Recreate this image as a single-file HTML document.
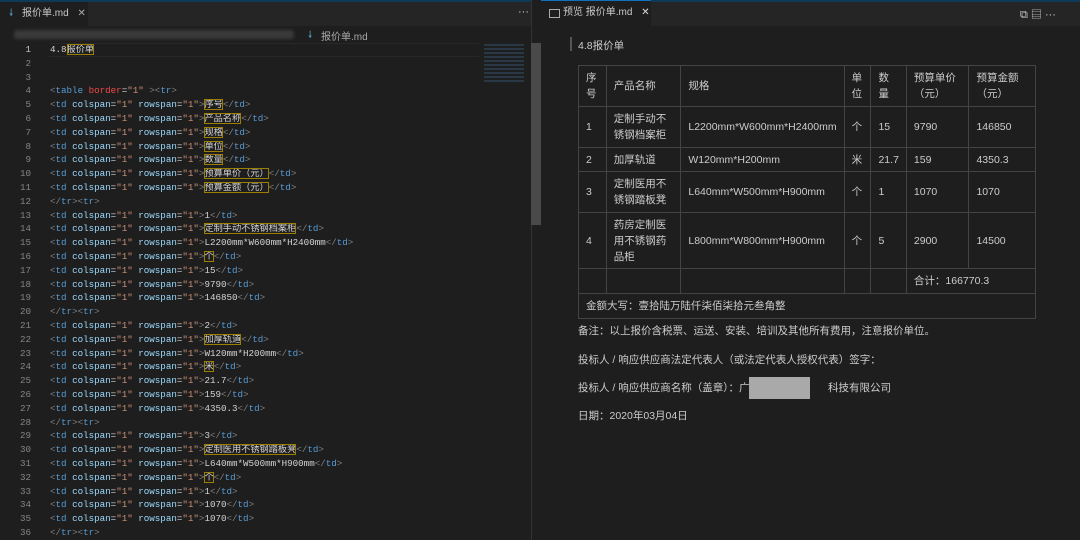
<!DOCTYPE html>
<html><head><meta charset="utf-8"><style>
*{margin:0;padding:0;box-sizing:border-box}
body{width:1080px;height:540px;background:#1e1e1e;overflow:hidden;position:relative;font-family:"Liberation Sans","Noto Sans CJK SC",sans-serif}
.topline{position:absolute;left:0;top:0;width:1080px;height:2px;background:#0e3a5a}
.tabbar{position:absolute;top:2px;height:24px;background:#252526}
.tab{position:absolute;top:2px;height:24px;background:#1e1e1e;color:#c8c8c8;font-size:10px;line-height:24px;padding-left:22px}
.crumb{position:absolute;left:0;top:26px;width:531px;height:17px;background:#1e1e1e;color:#aaa;font-size:10px}
.blur{position:absolute;top:4px;height:9px;background:#3a3a3a;border-radius:3px;filter:blur(1.5px)}
.code{position:absolute;left:0;top:43px;width:531px;font-family:"Liberation Mono","Noto Sans CJK SC",monospace;font-size:9.2px;color:#d4d4d4}
.ln{height:13.8px;line-height:13.8px;white-space:pre;position:relative}
.ln .n{position:absolute;left:0;width:31px;text-align:right;color:#858585}
.ln .c{position:absolute;left:50px}
.t{color:#569cd6}.g{color:#808080}.a{color:#9cdcfe}.v{color:#ce9178}.r{color:#f44747}
.b{outline:1px solid #9c7e00;outline-offset:-1px}
.cur{position:absolute;left:49px;top:43px;width:430px;height:14px;border-top:1px solid #282828;border-bottom:1px solid #282828}
.pv{position:absolute;left:541px;top:26px;width:539px;height:514px;background:#1e1e1e;color:#cccccc;font-size:10.5px}
table{position:absolute;left:37px;top:39px;border-collapse:collapse;width:458px}
td{border:1px solid #444;padding:0 7px;vertical-align:middle;line-height:16px;font-size:10.5px}
</style></head><body>
<div class="topline"></div>
<div class="tabbar" style="left:0;width:531px"></div>
<div class="tabbar" style="left:541px;width:539px"></div>
<div style="position:absolute;left:531px;top:0;width:10px;height:540px;background:#1e1e1e;border-left:1px solid #333"></div>
<div class="tab" style="left:0;width:88px"><span style="position:absolute;left:9px;color:#519aba">🠗</span>报价单.md <span style="color:#aaa;margin-left:6px">✕</span></div>
<div style="position:absolute;left:518px;top:6px;color:#ccc;font-size:11px">···</div>
<div class="tab" style="left:541px;width:110px;top:0;border-top:1px solid #0e70c0;height:26px"><span style="position:absolute;left:8px;top:8px;width:11px;height:9px;border:1px solid #aaa"></span>预览 报价单.md <span style="color:#ddd;margin-left:6px">✕</span></div>
<div style="position:absolute;left:1020px;top:6px;color:#ccc;font-size:11px">⧉ ▤ ···</div>
<div class="crumb">
<div class="blur" style="left:14px;width:280px"></div>
<span style="position:absolute;left:308px;top:2px;color:#519aba">🠗</span><span style="position:absolute;left:321px;top:2px">报价单.md</span></div>
<div class="cur"></div>
<div style="position:absolute;left:484px;top:44px;width:40px;height:40px;background:repeating-linear-gradient(#2e4a60 0 2px,#1e1e1e 2px 4px);opacity:.6"></div>
<div style="position:absolute;left:531px;top:43px;width:10px;height:182px;background:#4a4a4a"></div>
<div style="position:absolute;left:1074px;top:40px;width:6px;height:280px;background:#424242"></div>
<div class="code">
<div class="ln"><span class="n" style="color:#c6c6c6">1</span><span class="c">4.8<span class="b">报价单</span></span></div>
<div class="ln"><span class="n">2</span></div>
<div class="ln"><span class="n">3</span></div>
<div class="ln"><span class="n">4</span><span class="c"><span class="g">&lt;</span><span class="t">table</span> <span class="r">border</span>=<span class="v">"1"</span> <span class="g">&gt;&lt;</span><span class="t">tr</span><span class="g">&gt;</span></span></div>
<div class="ln"><span class="n">5</span><span class="c"><span class="g">&lt;</span><span class="t">td</span> <span class="a">colspan</span>=<span class="v">"1"</span> <span class="a">rowspan</span>=<span class="v">"1"</span><span class="g">&gt;</span><span class="b">序号</span><span class="g">&lt;/</span><span class="t">td</span><span class="g">&gt;</span></span></div>
<div class="ln"><span class="n">6</span><span class="c"><span class="g">&lt;</span><span class="t">td</span> <span class="a">colspan</span>=<span class="v">"1"</span> <span class="a">rowspan</span>=<span class="v">"1"</span><span class="g">&gt;</span><span class="b">产品名称</span><span class="g">&lt;/</span><span class="t">td</span><span class="g">&gt;</span></span></div>
<div class="ln"><span class="n">7</span><span class="c"><span class="g">&lt;</span><span class="t">td</span> <span class="a">colspan</span>=<span class="v">"1"</span> <span class="a">rowspan</span>=<span class="v">"1"</span><span class="g">&gt;</span><span class="b">规格</span><span class="g">&lt;/</span><span class="t">td</span><span class="g">&gt;</span></span></div>
<div class="ln"><span class="n">8</span><span class="c"><span class="g">&lt;</span><span class="t">td</span> <span class="a">colspan</span>=<span class="v">"1"</span> <span class="a">rowspan</span>=<span class="v">"1"</span><span class="g">&gt;</span><span class="b">单位</span><span class="g">&lt;/</span><span class="t">td</span><span class="g">&gt;</span></span></div>
<div class="ln"><span class="n">9</span><span class="c"><span class="g">&lt;</span><span class="t">td</span> <span class="a">colspan</span>=<span class="v">"1"</span> <span class="a">rowspan</span>=<span class="v">"1"</span><span class="g">&gt;</span><span class="b">数量</span><span class="g">&lt;/</span><span class="t">td</span><span class="g">&gt;</span></span></div>
<div class="ln"><span class="n">10</span><span class="c"><span class="g">&lt;</span><span class="t">td</span> <span class="a">colspan</span>=<span class="v">"1"</span> <span class="a">rowspan</span>=<span class="v">"1"</span><span class="g">&gt;</span><span class="b">预算单价（元）</span><span class="g">&lt;/</span><span class="t">td</span><span class="g">&gt;</span></span></div>
<div class="ln"><span class="n">11</span><span class="c"><span class="g">&lt;</span><span class="t">td</span> <span class="a">colspan</span>=<span class="v">"1"</span> <span class="a">rowspan</span>=<span class="v">"1"</span><span class="g">&gt;</span><span class="b">预算金额（元）</span><span class="g">&lt;/</span><span class="t">td</span><span class="g">&gt;</span></span></div>
<div class="ln"><span class="n">12</span><span class="c"><span class="g">&lt;/</span><span class="t">tr</span><span class="g">&gt;&lt;</span><span class="t">tr</span><span class="g">&gt;</span></span></div>
<div class="ln"><span class="n">13</span><span class="c"><span class="g">&lt;</span><span class="t">td</span> <span class="a">colspan</span>=<span class="v">"1"</span> <span class="a">rowspan</span>=<span class="v">"1"</span><span class="g">&gt;</span>1<span class="g">&lt;/</span><span class="t">td</span><span class="g">&gt;</span></span></div>
<div class="ln"><span class="n">14</span><span class="c"><span class="g">&lt;</span><span class="t">td</span> <span class="a">colspan</span>=<span class="v">"1"</span> <span class="a">rowspan</span>=<span class="v">"1"</span><span class="g">&gt;</span><span class="b">定制手动不锈钢档案柜</span><span class="g">&lt;/</span><span class="t">td</span><span class="g">&gt;</span></span></div>
<div class="ln"><span class="n">15</span><span class="c"><span class="g">&lt;</span><span class="t">td</span> <span class="a">colspan</span>=<span class="v">"1"</span> <span class="a">rowspan</span>=<span class="v">"1"</span><span class="g">&gt;</span>L2200mm*W600mm*H2400mm<span class="g">&lt;/</span><span class="t">td</span><span class="g">&gt;</span></span></div>
<div class="ln"><span class="n">16</span><span class="c"><span class="g">&lt;</span><span class="t">td</span> <span class="a">colspan</span>=<span class="v">"1"</span> <span class="a">rowspan</span>=<span class="v">"1"</span><span class="g">&gt;</span><span class="b">个</span><span class="g">&lt;/</span><span class="t">td</span><span class="g">&gt;</span></span></div>
<div class="ln"><span class="n">17</span><span class="c"><span class="g">&lt;</span><span class="t">td</span> <span class="a">colspan</span>=<span class="v">"1"</span> <span class="a">rowspan</span>=<span class="v">"1"</span><span class="g">&gt;</span>15<span class="g">&lt;/</span><span class="t">td</span><span class="g">&gt;</span></span></div>
<div class="ln"><span class="n">18</span><span class="c"><span class="g">&lt;</span><span class="t">td</span> <span class="a">colspan</span>=<span class="v">"1"</span> <span class="a">rowspan</span>=<span class="v">"1"</span><span class="g">&gt;</span>9790<span class="g">&lt;/</span><span class="t">td</span><span class="g">&gt;</span></span></div>
<div class="ln"><span class="n">19</span><span class="c"><span class="g">&lt;</span><span class="t">td</span> <span class="a">colspan</span>=<span class="v">"1"</span> <span class="a">rowspan</span>=<span class="v">"1"</span><span class="g">&gt;</span>146850<span class="g">&lt;/</span><span class="t">td</span><span class="g">&gt;</span></span></div>
<div class="ln"><span class="n">20</span><span class="c"><span class="g">&lt;/</span><span class="t">tr</span><span class="g">&gt;&lt;</span><span class="t">tr</span><span class="g">&gt;</span></span></div>
<div class="ln"><span class="n">21</span><span class="c"><span class="g">&lt;</span><span class="t">td</span> <span class="a">colspan</span>=<span class="v">"1"</span> <span class="a">rowspan</span>=<span class="v">"1"</span><span class="g">&gt;</span>2<span class="g">&lt;/</span><span class="t">td</span><span class="g">&gt;</span></span></div>
<div class="ln"><span class="n">22</span><span class="c"><span class="g">&lt;</span><span class="t">td</span> <span class="a">colspan</span>=<span class="v">"1"</span> <span class="a">rowspan</span>=<span class="v">"1"</span><span class="g">&gt;</span><span class="b">加厚轨道</span><span class="g">&lt;/</span><span class="t">td</span><span class="g">&gt;</span></span></div>
<div class="ln"><span class="n">23</span><span class="c"><span class="g">&lt;</span><span class="t">td</span> <span class="a">colspan</span>=<span class="v">"1"</span> <span class="a">rowspan</span>=<span class="v">"1"</span><span class="g">&gt;</span>W120mm*H200mm<span class="g">&lt;/</span><span class="t">td</span><span class="g">&gt;</span></span></div>
<div class="ln"><span class="n">24</span><span class="c"><span class="g">&lt;</span><span class="t">td</span> <span class="a">colspan</span>=<span class="v">"1"</span> <span class="a">rowspan</span>=<span class="v">"1"</span><span class="g">&gt;</span><span class="b">米</span><span class="g">&lt;/</span><span class="t">td</span><span class="g">&gt;</span></span></div>
<div class="ln"><span class="n">25</span><span class="c"><span class="g">&lt;</span><span class="t">td</span> <span class="a">colspan</span>=<span class="v">"1"</span> <span class="a">rowspan</span>=<span class="v">"1"</span><span class="g">&gt;</span>21.7<span class="g">&lt;/</span><span class="t">td</span><span class="g">&gt;</span></span></div>
<div class="ln"><span class="n">26</span><span class="c"><span class="g">&lt;</span><span class="t">td</span> <span class="a">colspan</span>=<span class="v">"1"</span> <span class="a">rowspan</span>=<span class="v">"1"</span><span class="g">&gt;</span>159<span class="g">&lt;/</span><span class="t">td</span><span class="g">&gt;</span></span></div>
<div class="ln"><span class="n">27</span><span class="c"><span class="g">&lt;</span><span class="t">td</span> <span class="a">colspan</span>=<span class="v">"1"</span> <span class="a">rowspan</span>=<span class="v">"1"</span><span class="g">&gt;</span>4350.3<span class="g">&lt;/</span><span class="t">td</span><span class="g">&gt;</span></span></div>
<div class="ln"><span class="n">28</span><span class="c"><span class="g">&lt;/</span><span class="t">tr</span><span class="g">&gt;&lt;</span><span class="t">tr</span><span class="g">&gt;</span></span></div>
<div class="ln"><span class="n">29</span><span class="c"><span class="g">&lt;</span><span class="t">td</span> <span class="a">colspan</span>=<span class="v">"1"</span> <span class="a">rowspan</span>=<span class="v">"1"</span><span class="g">&gt;</span>3<span class="g">&lt;/</span><span class="t">td</span><span class="g">&gt;</span></span></div>
<div class="ln"><span class="n">30</span><span class="c"><span class="g">&lt;</span><span class="t">td</span> <span class="a">colspan</span>=<span class="v">"1"</span> <span class="a">rowspan</span>=<span class="v">"1"</span><span class="g">&gt;</span><span class="b">定制医用不锈钢踏板凳</span><span class="g">&lt;/</span><span class="t">td</span><span class="g">&gt;</span></span></div>
<div class="ln"><span class="n">31</span><span class="c"><span class="g">&lt;</span><span class="t">td</span> <span class="a">colspan</span>=<span class="v">"1"</span> <span class="a">rowspan</span>=<span class="v">"1"</span><span class="g">&gt;</span>L640mm*W500mm*H900mm<span class="g">&lt;/</span><span class="t">td</span><span class="g">&gt;</span></span></div>
<div class="ln"><span class="n">32</span><span class="c"><span class="g">&lt;</span><span class="t">td</span> <span class="a">colspan</span>=<span class="v">"1"</span> <span class="a">rowspan</span>=<span class="v">"1"</span><span class="g">&gt;</span><span class="b">个</span><span class="g">&lt;/</span><span class="t">td</span><span class="g">&gt;</span></span></div>
<div class="ln"><span class="n">33</span><span class="c"><span class="g">&lt;</span><span class="t">td</span> <span class="a">colspan</span>=<span class="v">"1"</span> <span class="a">rowspan</span>=<span class="v">"1"</span><span class="g">&gt;</span>1<span class="g">&lt;/</span><span class="t">td</span><span class="g">&gt;</span></span></div>
<div class="ln"><span class="n">34</span><span class="c"><span class="g">&lt;</span><span class="t">td</span> <span class="a">colspan</span>=<span class="v">"1"</span> <span class="a">rowspan</span>=<span class="v">"1"</span><span class="g">&gt;</span>1070<span class="g">&lt;/</span><span class="t">td</span><span class="g">&gt;</span></span></div>
<div class="ln"><span class="n">35</span><span class="c"><span class="g">&lt;</span><span class="t">td</span> <span class="a">colspan</span>=<span class="v">"1"</span> <span class="a">rowspan</span>=<span class="v">"1"</span><span class="g">&gt;</span>1070<span class="g">&lt;/</span><span class="t">td</span><span class="g">&gt;</span></span></div>
<div class="ln"><span class="n">36</span><span class="c"><span class="g">&lt;/</span><span class="t">tr</span><span class="g">&gt;&lt;</span><span class="t">tr</span><span class="g">&gt;</span></span></div>
</div>

<div class="pv">
<div style="position:absolute;left:29px;top:11px;width:2px;height:14px;background:#555"></div>
<div style="position:absolute;left:37px;top:12px">4.8报价单</div>
<table>
<colgroup><col style="width:28px"><col style="width:79px"><col style="width:157px"><col style="width:27px"><col style="width:35px"><col style="width:64px"><col style="width:68px"></colgroup>
<tr style="height:41px"><td>序<br>号</td><td>产品名称</td><td>规格</td><td>单<br>位</td><td>数<br>量</td><td>预算单价<br>（元）</td><td>预算金额<br>（元）</td></tr>
<tr style="height:41px"><td>1</td><td>定制手动不<br>锈钢档案柜</td><td>L2200mm*W600mm*H2400mm</td><td>个</td><td>15</td><td>9790</td><td>146850</td></tr>
<tr style="height:24px"><td>2</td><td>加厚轨道</td><td>W120mm*H200mm</td><td>米</td><td>21.7</td><td>159</td><td>4350.3</td></tr>
<tr style="height:41px"><td>3</td><td>定制医用不<br>锈钢踏板凳</td><td>L640mm*W500mm*H900mm</td><td>个</td><td>1</td><td>1070</td><td>1070</td></tr>
<tr style="height:56px"><td>4</td><td>药房定制医<br>用不锈钢药<br>品柜</td><td>L800mm*W800mm*H900mm</td><td>个</td><td>5</td><td>2900</td><td>14500</td></tr>
<tr style="height:25px"><td></td><td></td><td></td><td></td><td></td><td colspan="2">合计：166770.3</td></tr>
<tr style="height:25px"><td colspan="7">金额大写：壹拾陆万陆仟柒佰柒拾元叁角整</td></tr>
</table>
<div style="position:absolute;left:37px;top:297px">备注：以上报价含税票、运送、安装、培训及其他所有费用，注意报价单位。</div>
<div style="position:absolute;left:37px;top:326px">投标人 / 响应供应商法定代表人（或法定代表人授权代表）签字：</div>
<div style="position:absolute;left:37px;top:354px">投标人 / 响应供应商名称（盖章）：广</div>
<div style="position:absolute;left:208px;top:351px;width:61px;height:22px;background:#a9a9a9"></div>
<div style="position:absolute;left:287px;top:354px">科技有限公司</div>
<div style="position:absolute;left:37px;top:382px">日期：2020年03月04日</div>
</div>
</body></html>
